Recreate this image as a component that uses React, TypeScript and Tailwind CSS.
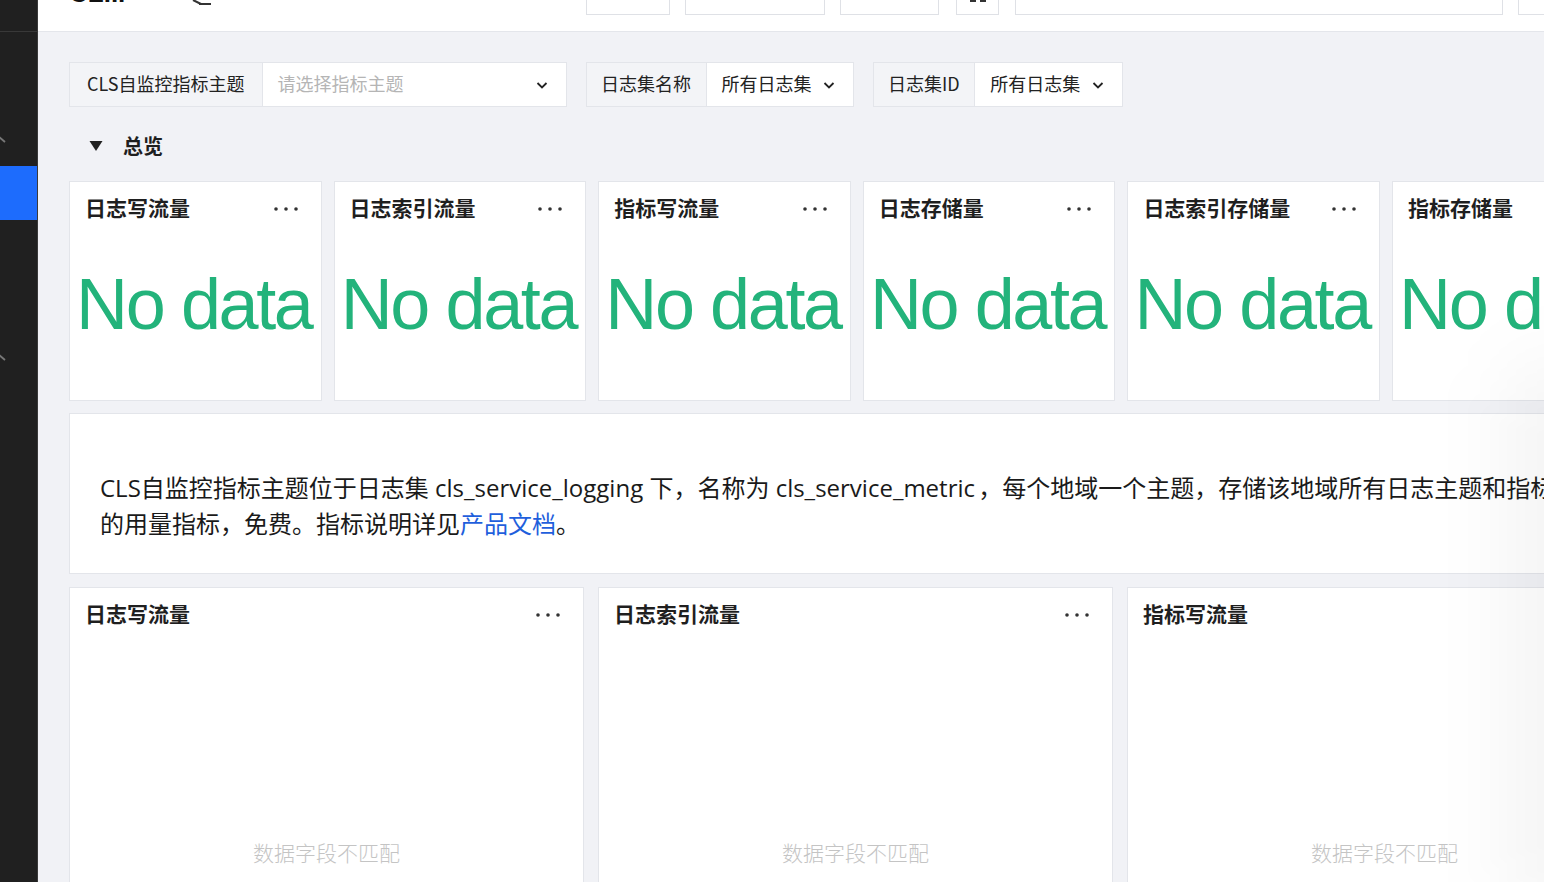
import React from "react";

const CJK = "font-['Noto_Sans_CJK_SC','Noto_Sans',sans-serif]";

function Dots() {
  return (
    <svg width="26" height="6" viewBox="0 0 26 6" className="shrink-0 mt-[4px]">
      <circle cx="3" cy="3" r="1.8" fill="#333" />
      <circle cx="13" cy="3" r="1.8" fill="#333" />
      <circle cx="23" cy="3" r="1.8" fill="#333" />
    </svg>
  );
}

function Chevron() {
  return (
    <svg width="12" height="8" viewBox="0 0 12 8" className="shrink-0">
      <path d="M1.5 2 L6 6.5 L10.5 2" fill="none" stroke="#222" strokeWidth="1.8" />
    </svg>
  );
}

function StatCard({ title, dots = true }: { title: string; dots?: boolean }) {
  return (
    <div className="w-[252.6px] h-[220px] shrink-0 bg-white border border-[#e3e5ea] flex flex-col">
      <div className="flex items-center justify-between pl-[15px] pr-[22px] pt-[12px] h-[38px]">
        <span className={`${CJK} text-[21px] font-bold text-[#1f1f1f] leading-[26px] whitespace-nowrap`}>{title}</span>
        {dots && <Dots />}
      </div>
      <div className="mt-[48px] pr-[3px] text-center whitespace-nowrap font-['Liberation_Sans',Arial,sans-serif] text-[72px] leading-[72px] tracking-[-2.4px] text-[#23b37b]">
        No data
      </div>
    </div>
  );
}

function ChartCard({ title, dots = true }: { title: string; dots?: boolean }) {
  return (
    <div className="w-[515px] h-[320px] shrink-0 bg-white border border-[#e3e5ea] flex flex-col">
      <div className="flex items-center justify-between pl-[15px] pr-[22px] pt-[12px] h-[38px]">
        <span className={`${CJK} text-[21px] font-bold text-[#1f1f1f] leading-[26px] whitespace-nowrap`}>{title}</span>
        {dots && <Dots />}
      </div>
      <div className={`mt-[212px] text-center ${CJK} text-[21px] leading-[28px] text-[#c4c4c4] font-light`}>
        数据字段不匹配
      </div>
    </div>
  );
}

function Filter({ label, value, placeholder, selectW, labelPx }: { label: string; value: string; placeholder?: boolean; selectW: string; labelPx: string }) {
  return (
    <div className="flex h-[45px] border border-[#e3e5ea] shrink-0">
      <div className={`flex items-center ${labelPx} pb-[3px] bg-[#f3f4f7] border-r border-[#e3e5ea] ${CJK} text-[18px] text-[#222] whitespace-nowrap`}>
        {label}
      </div>
      <div className={`flex items-center justify-between bg-white pl-[15px] pr-[18px] pb-[3px] ${selectW} ${CJK} text-[18px] ${placeholder ? "text-[#b5b5b5]" : "text-[#222]"}`}>
        <span className="whitespace-nowrap">{value}</span>
        <span className="pt-[3px] flex"><Chevron /></span>
      </div>
    </div>
  );
}

export default function App() {
  return (
    <div className="w-[1544px] h-[882px] overflow-hidden flex bg-[#f1f2f6] relative">
      {/* Sidebar */}
      <aside className="w-[38px] shrink-0 h-full bg-[#202020] border-r border-[#3a3a3a] flex flex-col">
        <div className="h-[32px] border-b border-[#383838]" />
        <svg width="10" height="10" viewBox="0 0 10 10" className="mt-[102px] -ml-[2px]">
          <path d="M0 2 L7 8" stroke="#777" strokeWidth="1.8" fill="none" />
        </svg>
        <div className="mt-[22px] h-[54px] w-full bg-[#1d6cfd]" />
        <svg width="10" height="10" viewBox="0 0 10 10" className="mt-[132px] -ml-[2px]">
          <path d="M0 2 L7 8" stroke="#777" strokeWidth="1.8" fill="none" />
        </svg>
      </aside>

      <div className="flex-1 min-w-0 flex flex-col">
        {/* Top bar */}
        <header className="h-[32px] shrink-0 bg-white border-b border-[#e4e6eb] flex items-start overflow-hidden">
          <div className="w-[548px] shrink-0 flex items-start">
            <span className="ml-[31px] -mt-[22px] font-['Liberation_Sans',Arial,sans-serif] font-bold text-[26px] leading-[30px] text-[#111] whitespace-nowrap">CL...</span>
            <svg width="24" height="8" viewBox="0 0 24 8" className="ml-[66px] shrink-0">
              <path d="M2 0 L10 4" stroke="#333" strokeWidth="2" />
              <rect x="8" y="3" width="12" height="2" fill="#333" />
            </svg>
          </div>
          <div className="shrink-0 -mt-[22px] h-[37px] w-[84px] border border-[#dfe1e6] bg-white" />
          <div className="shrink-0 ml-[15px] -mt-[22px] h-[37px] w-[140px] border border-[#dfe1e6] bg-white" />
          <div className="shrink-0 ml-[15px] -mt-[22px] h-[37px] w-[99px] border border-[#dfe1e6] bg-white" />
          <div className="shrink-0 ml-[17px] -mt-[22px] h-[37px] w-[43px] border border-[#dfe1e6] bg-white flex items-end justify-center gap-[4px] pb-[12px]">
            <div className="w-[6px] h-[4px] bg-[#333]" />
            <div className="w-[6px] h-[4px] bg-[#333]" />
          </div>
          <div className="shrink-0 ml-[16px] -mt-[22px] h-[37px] w-[488px] border border-[#dfe1e6] bg-white" />
          <div className="shrink-0 ml-[15px] -mt-[22px] h-[37px] w-[60px] border border-[#dfe1e6] bg-white" />
        </header>

        <main className="pl-[31px] pt-[30px] flex flex-col">
          {/* Filters */}
          <div className="flex gap-[19px]">
            <Filter label="CLS自监控指标主题" value="请选择指标主题" placeholder selectW="w-[303px]" labelPx="px-[17px]" />
            <Filter label="日志集名称" value="所有日志集" selectW="w-[146px]" labelPx="px-[14.5px]" />
            <Filter label="日志集ID" value="所有日志集" selectW="w-[147px]" labelPx="px-[14.5px]" />
          </div>

          {/* Section header */}
          <div className="flex items-center h-[40px] mt-[19px]">
            <svg width="14" height="12" viewBox="0 0 14 12" className="ml-[20px]">
              <path d="M0.5 1 L13.5 1 L7 11 Z" fill="#222" />
            </svg>
            <span className={`ml-[20px] ${CJK} text-[20px] font-bold text-[#1f1f1f]`}>总览</span>
          </div>

          {/* Stat cards */}
          <div className="flex gap-[12px] mt-[15px]">
            <StatCard title="日志写流量" />
            <StatCard title="日志索引流量" />
            <StatCard title="指标写流量" />
            <StatCard title="日志存储量" />
            <StatCard title="日志索引存储量" />
            <StatCard title="指标存储量" />
          </div>

          {/* Description */}
          <div className="mt-[12px] h-[161px] w-[1560px] shrink-0 bg-white border border-[#e3e5ea] pl-[30px] pt-[56px]">
            <p className={`font-['Open_Sans','Noto_Sans_CJK_SC',sans-serif] text-[24px] leading-[36px] text-[#1a1a1a] whitespace-nowrap`}>
              CLS自监控指标主题位于日志集 cls_service_logging 下，名称为 cls_service_metric<span className="tracking-[-3px]"> </span>，每个地域一个主题，存储该地域所有日志主题和指标主题
              <br />
              的用量指标，免费。指标说明详见<span className="text-[#1f5fdc]">产品文档</span>。
            </p>
          </div>

          {/* Chart cards */}
          <div className="flex gap-[14px] mt-[13px]">
            <ChartCard title="日志写流量" />
            <ChartCard title="日志索引流量" />
            <ChartCard title="指标写流量" />
          </div>
        </main>
      </div>

      {/* right-edge soft shadow */}
      <div className="absolute right-[-50px] top-[360px] w-[80px] h-[560px] rounded-full bg-black/[0.05] blur-2xl pointer-events-none" />
    </div>
  );
}
